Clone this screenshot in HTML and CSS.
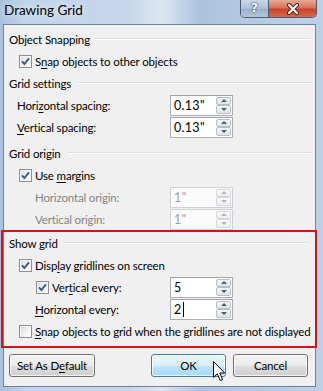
FILE: index.html
```html
<!DOCTYPE html>
<html lang="en">
<head>
    <meta charset="UTF-8">
    <title>Drawing Grid</title>
    <link rel="stylesheet" href="styles.css">
</head>
<body>
<div class="window">
    <div class="titlebar">
        <span class="title">Drawing Grid</span>
        <div class="caption-btns">
            <span class="cap-help">?</span>
            <span class="cap-close">
                <svg width="14" height="12" viewBox="0 0 14 12">
                    <path d="M3 2 L11 10 M11 2 L3 10" stroke="#5a1a10" stroke-width="4" stroke-linecap="round"/>
                    <path d="M3 2 L11 10 M11 2 L3 10" stroke="#fff" stroke-width="2.2" stroke-linecap="round"/>
                </svg>
            </span>
        </div>
    </div>

    <div class="client">
        <!-- Object snapping -->
        <div class="group-head"><span>Object Snapping</span></div>
        <div class="check-row">
            <span class="check"><svg viewBox="0 0 11 11"><path d="M2 5.3 L4.4 8 L9 2.4"/></svg></span>
            <span>S<u>n</u>ap objects to other objects</span>
        </div>

        <!-- Grid settings -->
        <div class="group-head"><span>Grid settings</span></div>
        <div class="field-row">
            <span>Hori<u>z</u>ontal spacing:</span>
            <div class="spin"><span class="spin-val">0.13"</span><span class="spin-btns"><i class="up"></i><i class="down"></i></span></div>
        </div>
        <div class="field-row">
            <span><u>V</u>ertical spacing:</span>
            <div class="spin"><span class="spin-val">0.13"</span><span class="spin-btns"><i class="up"></i><i class="down"></i></span></div>
        </div>

        <!-- Grid origin -->
        <div class="group-head spaced"><span>Grid origin</span></div>
        <div class="check-row">
            <span class="check"><svg viewBox="0 0 11 11"><path d="M2 5.3 L4.4 8 L9 2.4"/></svg></span>
            <span>Use <u>m</u>argins</span>
        </div>
        <div class="field-row indent disabled">
            <span>Horizontal origin:</span>
            <div class="spin"><span class="spin-val">1"</span><span class="spin-btns"><i class="up"></i><i class="down"></i></span></div>
        </div>
        <div class="field-row indent disabled">
            <span>Vertical origin:</span>
            <div class="spin"><span class="spin-val">1"</span><span class="spin-btns"><i class="up"></i><i class="down"></i></span></div>
        </div>

        <!-- Show grid (highlighted) -->
        <div class="highlight">
            <div class="group-head"><span>Show grid</span></div>
            <div class="check-row">
                <span class="check"><svg viewBox="0 0 11 11"><path d="M2 5.3 L4.4 8 L9 2.4"/></svg></span>
                <span>Disp<u>l</u>ay gridlines on screen</span>
            </div>
            <div class="field-row sub-check">
                <span class="check"><svg viewBox="0 0 11 11"><path d="M2 5.3 L4.4 8 L9 2.4"/></svg></span>
                <span class="sub-label">Ver<u>t</u>ical every:</span>
                <div class="spin"><span class="spin-val">5</span><span class="spin-btns"><i class="up"></i><i class="down"></i></span></div>
            </div>
            <div class="field-row sub">
                <span><u>H</u>orizontal every:</span>
                <div class="spin"><span class="spin-val">2<span class="caret"></span></span><span class="spin-btns"><i class="up"></i><i class="down"></i></span></div>
            </div>
            <div class="check-row">
                <span class="check off"></span>
                <span><u>S</u>nap objects to grid when the gridlines are not displayed</span>
            </div>
        </div>

        <div class="buttons">
            <button class="btn wide">Set As D<u>e</u>fault</button>
            <button class="btn default">OK</button>
            <button class="btn">Cancel</button>
        </div>
    </div>

    <!-- mouse pointer over OK -->
    <svg class="pointer" width="13" height="21" viewBox="0 0 13 21">
        <path d="M0.5 0.5 L0.5 16.5 L4.3 12.8 L7.2 19.5 L9.6 18.5 L6.8 12 L11.7 12 Z" fill="#fff" stroke="#000" stroke-width="1" stroke-linejoin="round"/>
    </svg>
</div>
</body>
</html>
```

FILE: styles.css
```css
body {
    margin: 0;
    font-family: Lato, "Liberation Sans", sans-serif;
    font-size: 11.5px;
    letter-spacing: -0.15px;
    color: #000;
}

.window {
    position: relative;
    width: 323px;
    height: 391px;
    box-sizing: border-box;
    padding: 0 7px 0 3px;
    background: linear-gradient(to right, #a9c1dd 0%, #c2d4e9 8%, #c6d7eb 40%, #dbe6f2 50%, #abc3df 62%, #b6cae2 80%, #bdd0e6 100%);
    overflow: hidden;
}

.titlebar {
    height: 24px;
    display: flex;
    align-items: flex-start;
    margin: 0 -7px 0 -3px;
}

.title {
    padding: 2px 0 0 4px;
    font-size: 13.5px;
    letter-spacing: 0;
    line-height: 16px;
    text-shadow: 0 0 6px rgba(255, 255, 255, 0.9);
}

.caption-btns {
    margin-left: auto;
    margin-right: 6px;
    display: flex;
    height: 17px;
    border: 1px solid #4a5a70;
    border-top: none;
    border-radius: 0 0 5px 5px;
    overflow: hidden;
}

.cap-help {
    width: 27px;
    background: linear-gradient(#c9d6e6 0%, #aebfd6 50%, #98adc9 51%, #b6c7dc 100%);
    border-right: 1px solid #4a5a70;
    color: #fff;
    font-family: "DejaVu Sans", sans-serif;
    font-weight: bold;
    font-size: 12px;
    line-height: 16px;
    text-align: center;
    text-shadow: 0 0 2px #2b3a52, 0 0 1px #2b3a52;
}

.cap-close {
    width: 47px;
    background: linear-gradient(#e9a897 0%, #d8745f 45%, #c8442b 55%, #d66a4c 100%);
    display: flex;
    align-items: center;
    justify-content: center;
}

.client {
    height: 363px;
    box-sizing: border-box;
    padding-top: 3px;
    border: 1px solid #6f829b;
    background-color: #f0f0f0;
}

/* group header with etched line */
.group-head {
    height: 22px;
    display: flex;
    align-items: center;
    gap: 7px;
    padding: 0 3px 0 5px;
}

.group-head::after {
    content: "";
    flex: 1;
    height: 0;
    border-top: 1px solid #d5dfe5;
    border-bottom: 1px solid #fff;
}

.group-head.spaced {
    margin-top: 4px;
}

.check-row {
    height: 22px;
    display: flex;
    align-items: center;
    gap: 3px;
    padding-left: 15px;
    white-space: nowrap;
}

.check {
    width: 13px;
    height: 13px;
    box-sizing: border-box;
    border: 1px solid #8e8f8f;
    background: linear-gradient(135deg, #d6d9dc 0%, #f4f4f4 60%, #fff 100%);
    box-shadow: inset 0 0 0 1px #f7f7f7;
    display: flex;
    align-items: center;
    justify-content: center;
    flex-shrink: 0;
}

.check svg {
    width: 11px;
    height: 11px;
}

.check path {
    fill: none;
    stroke: #3d5390;
    stroke-width: 1.9;
}

.field-row {
    height: 22px;
    display: flex;
    align-items: center;
    padding: 0 82px 0 13px;
    white-space: nowrap;
}

.field-row.indent {
    padding-left: 31px;
}

.field-row.disabled {
    color: #858585;
}

.spin {
    margin-left: auto;
    width: 63px;
    height: 21px;
    box-sizing: border-box;
    display: flex;
    border: 1px solid #abadb3;
    border-top-color: #9ea2ab;
    background-color: #fff;
}

.spin-val {
    flex: 1;
    padding-left: 3px;
    line-height: 19px;
    font-size: 12.5px;
    letter-spacing: 0.3px;
    display: flex;
    align-items: center;
}

.spin-btns {
    width: 16px;
    display: flex;
    flex-direction: column;
    padding: 1px 1px 1px 0;
    box-sizing: border-box;
}

.spin-btns i {
    flex: 1;
    border: 1px solid #b7bec8;
    border-radius: 2px;
    background: linear-gradient(#f8f8f8, #e2e4e7);
    display: flex;
    align-items: center;
    justify-content: center;
}

.spin-btns i::after {
    content: "";
    border-left: 3px solid transparent;
    border-right: 3px solid transparent;
}

.spin-btns .up::after {
    border-bottom: 3px solid #4c5b74;
}

.spin-btns .down::after {
    border-top: 3px solid #4c5b74;
}

.disabled .spin {
    border-color: #cdd0d5;
    background-color: #fbfbfb;
}

.disabled .spin-val {
    color: #a3a3a3;
}

.disabled .spin-btns i {
    border-color: #d3d7dc;
    background: linear-gradient(#fbfbfb, #eeeff1);
}

.disabled .spin-btns .up::after {
    border-bottom-color: #b3b8c0;
}

.disabled .spin-btns .down::after {
    border-top-color: #b3b8c0;
}

.caret {
    display: inline-block;
    width: 1px;
    height: 15px;
    margin-left: 1px;
    background-color: #000;
}

/* red highlight around the "Show grid" group */
.highlight {
    margin: 0 -2px 0 -3px;
    border: 2px solid #d31414;
    padding-bottom: 4px;
}

.highlight .group-head {
    padding-left: 6px;
    padding-right: 6px;
}

.highlight .check-row {
    padding-left: 16px;
}

.highlight .field-row {
    padding-left: 32px;
}

.highlight .field-row.sub-check {
    padding-left: 33px;
}

.sub-label {
    margin-left: 3px;
}

.buttons {
    display: flex;
    gap: 7px;
    margin-top: 6px;
    padding: 0 7px 0 5px;
}

.btn {
    width: 75px;
    height: 23px;
    padding: 0;
    border: 1px solid #707070;
    border-radius: 3px;
    background: linear-gradient(#f2f2f2 0%, #ebebeb 50%, #dddddd 51%, #cfcfcf 100%);
    box-shadow: inset 0 0 0 1px rgba(255, 255, 255, 0.75);
    font: inherit;
    letter-spacing: inherit;
    color: #000;
}

.btn.wide {
    width: 86px;
    margin-right: auto;
}

.btn.default {
    border-color: #3c7fb1;
    background: linear-gradient(#eaf6fd 0%, #d9f0fc 50%, #bee6fd 51%, #a7d9f5 100%);
}

u {
    text-underline-offset: 2px;
}

.pointer {
    position: absolute;
    left: 213px;
    top: 361px;
}
```
